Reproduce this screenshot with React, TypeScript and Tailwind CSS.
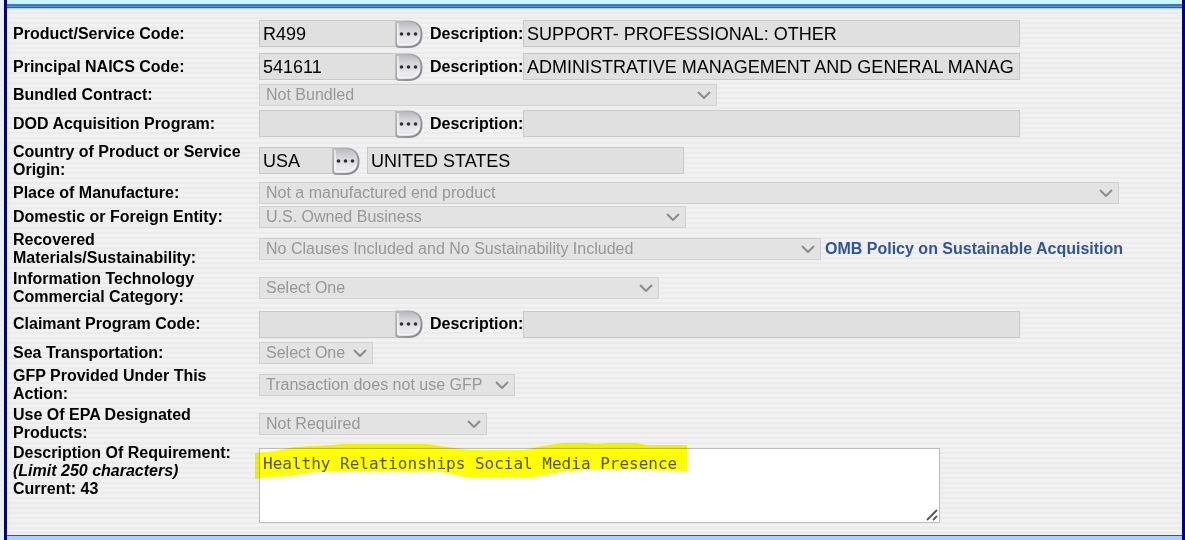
import type { ReactNode } from 'react';

const two = 'min-h-[37px]';

function Row({ label, htmlFor, size = '', children }: { label: ReactNode; htmlFor: string; size?: string; children: ReactNode }) {
  return (
    <div className={`flex items-center ${size}`}>
      <label htmlFor={htmlFor} className="w-[246px] shrink-0 pr-3 font-bold">{label}</label>
      <div className="flex min-w-0 flex-1 items-center">{children}</div>
    </div>
  );
}

function Field({ id, value = '', width, label }: { id: string; value?: string; width: string; label?: string }) {
  return (
    <input
      id={id}
      aria-label={label}
      readOnly
      defaultValue={value}
      className={`h-[27px] min-w-0 border border-[#c9c9c9] bg-[#e0e0e0] pr-[5px] pl-[3px] text-lg text-black outline-none ${width}`}
    />
  );
}

function Lookup({ label }: { label: string }) {
  return (
    <button type="button" aria-label={label} className="-ml-px h-7 w-7 shrink-0">
      <svg viewBox="0 0 28 28" className="block h-7 w-7">
        <defs>
          <linearGradient id="face" x1="0" y1="0" x2="0" y2="1">
            <stop offset="0" stopColor="#b9b9be" />
            <stop offset="0.3" stopColor="#d3d3d8" />
            <stop offset="0.8" stopColor="#ebebee" />
            <stop offset="1" stopColor="#d8d8dc" />
          </linearGradient>
          <linearGradient id="edge" x1="0" y1="0" x2="1" y2="1">
            <stop offset="0" stopColor="#bdbdc0" />
            <stop offset="0.5" stopColor="#a2a2a6" />
            <stop offset="1" stopColor="#7c7c82" />
          </linearGradient>
        </defs>
        <path d="M0.500 0.500H14C22.500 0.500 27.500 6 27.500 14V15C27.500 23 22 28 14 28H4C1.500 28 0.500 26.500 0.500 24.500Z" fill="url(#edge)" />
        <path d="M2 2H14C21 2 25.500 6.500 25.500 13.500V14.500C25.500 21.500 21 26 14 26H4.500C2.500 26 2 25 2 23.500Z" fill="url(#face)" />
        <path d="M3 3v19.500c0 1.500 1 2 2.500 2H14c5 0 9-3 10-7" fill="none" stroke="#f8f8fa" strokeWidth="1.300" />
        <g fill="#303034">
          <circle cx="6.500" cy="14" r="1.800" />
          <circle cx="13.500" cy="14" r="1.800" />
          <circle cx="20.500" cy="14" r="1.800" />
        </g>
      </svg>
    </button>
  );
}

function Picker({ id, value, width }: { id: string; value: string; width: string }) {
  return (
    <div className={`relative shrink-0 ${width}`}>
      <select
        id={id}
        disabled
        className="block h-[22px] w-full appearance-none border border-[#d0d0d0] bg-[#e3e3e3] pl-[6px] text-base leading-5 text-[#979797] opacity-100"
      >
        <option>{value}</option>
      </select>
      <svg viewBox="0 0 14 8" className="pointer-events-none absolute top-[7px] right-[6px] h-2 w-[14px]" fill="none" stroke="#8c8c8c" strokeWidth="2">
        <path d="M1 1l6 6 6-6" />
      </svg>
    </div>
  );
}

function CodeRow({ id, label, value, description, size = 'min-h-[31px]' }: { id: string; label: string; value?: string; description?: string; size?: string }) {
  return (
    <Row label={label} htmlFor={id} size={size}>
      <Field id={id} value={value} width="w-[137px] shrink-0" />
      <Lookup label={`Look up ${label}`} />
      <label htmlFor={`${id}-description`} className="ml-[7px] w-[93px] shrink-0 font-bold">Description:</label>
      <Field id={`${id}-description`} value={description} width="w-[497px]" />
    </Row>
  );
}

export default function App() {
  return (
    <div className="bg-[#e9eef2] pl-1 font-['Liberation_Sans',Arial,sans-serif] text-base leading-[18px] text-black">
      <main className="border-r-[3px] border-l-[3px] border-l-[#000080] border-r-[#000090]">
        <div className="h-1 bg-[#ccf6ff]" />
        <div className="h-[5px] bg-[linear-gradient(#3b78c3_0_2px,#5d93d2_2px_3px,#3b5f8f_3px_4px,#a9d1fb_4px_5px)]" />
        <form className="flex flex-col gap-[2px] bg-[repeating-linear-gradient(#f1f1f1_0_3px,#ebebeb_3px_5px)] pt-[9px] pb-3 pl-[6px]">
          <CodeRow id="psc" label="Product/Service Code:" value="R499" description="SUPPORT- PROFESSIONAL: OTHER" />
          <CodeRow id="naics" label="Principal NAICS Code:" value="541611" description="ADMINISTRATIVE MANAGEMENT AND GENERAL MANAGEMENT CONSULTING SERVICES" />
          <Row label="Bundled Contract:" htmlFor="bundled">
            <Picker id="bundled" value="Not Bundled" width="w-[458px]" />
          </Row>
          <CodeRow id="dod" label="DOD Acquisition Program:" />
          <Row label="Country of Product or Service Origin:" htmlFor="country" size="min-h-[39px]">
            <Field id="country" value="USA" width="w-[74px] shrink-0" />
            <Lookup label="Look up country" />
            <div className="ml-[7px] flex">
              <Field id="country-name" label="Country name" value="UNITED STATES" width="w-[317px]" />
            </div>
          </Row>
          <Row label="Place of Manufacture:" htmlFor="place">
            <Picker id="place" value="Not a manufactured end product" width="w-[860px]" />
          </Row>
          <Row label="Domestic or Foreign Entity:" htmlFor="entity">
            <Picker id="entity" value="U.S. Owned Business" width="w-[427px]" />
          </Row>
          <Row label="Recovered Materials/Sustainability:" htmlFor="recovered" size={two}>
            <Picker id="recovered" value="No Clauses Included and No Sustainability Included" width="w-[562px]" />
            <a href="#omb-policy" className="ml-1 font-bold whitespace-nowrap text-[#2f5597]">OMB Policy on Sustainable Acquisition</a>
          </Row>
          <Row label={<>Information Technology<br />Commercial Category:</>} htmlFor="it" size={two}>
            <Picker id="it" value="Select One" width="w-[400px]" />
          </Row>
          <CodeRow id="claimant" label="Claimant Program Code:" size="min-h-8" />
          <Row label="Sea Transportation:" htmlFor="sea">
            <Picker id="sea" value="Select One" width="w-[114px]" />
          </Row>
          <Row label={<>GFP Provided Under This<br />Action:</>} htmlFor="gfp" size={two}>
            <Picker id="gfp" value="Transaction does not use GFP" width="w-[256px]" />
          </Row>
          <Row label={<>Use Of EPA Designated<br />Products:</>} htmlFor="epa" size={two}>
            <Picker id="epa" value="Not Required" width="w-[228px]" />
          </Row>
          <div className="flex items-start">
            <label htmlFor="requirement" className="w-[246px] shrink-0 font-bold">
              Description Of Requirement:
              <br />
              <em>(Limit 250 characters)</em>
              <br />
              Current: 43
            </label>
            <div className="relative mt-1 w-[681px]">
              <textarea
                id="requirement"
                defaultValue="Healthy Relationships Social Media Presence"
                className="block h-[75px] w-full resize-none border border-[#bdbdbd] bg-white px-[3px] py-[5px] font-['DejaVu_Sans_Mono',monospace] text-base leading-5 text-[#555555] outline-none"
              />
              <svg viewBox="0 0 434 36" className="pointer-events-none absolute -top-[5px] -left-1 h-9 w-[434px] mix-blend-multiply">
                <path d="M0 10L18 8 40 4 62 3 90 1H172L192 4 216 7H270L288 3 308 0H330L340 1 354 0H380L392 2H432V28L384 27 362 26 330 27 306 29 278 34H210L198 31 180 28H78L50 30 36 33 12 34 0 36Z" fill="#ffff00" />
              </svg>
              <svg viewBox="0 0 12 12" className="pointer-events-none absolute right-[2px] bottom-[2px] h-3 w-3" fill="none" stroke="#555555" strokeWidth="1.800">
                <path d="M1 11L11 1M7 11l4-4" />
              </svg>
            </div>
          </div>
        </form>
        <div className="h-[5px] border-t border-[#36577f] bg-[#a9d3ff]" />
      </main>
    </div>
  );
}
